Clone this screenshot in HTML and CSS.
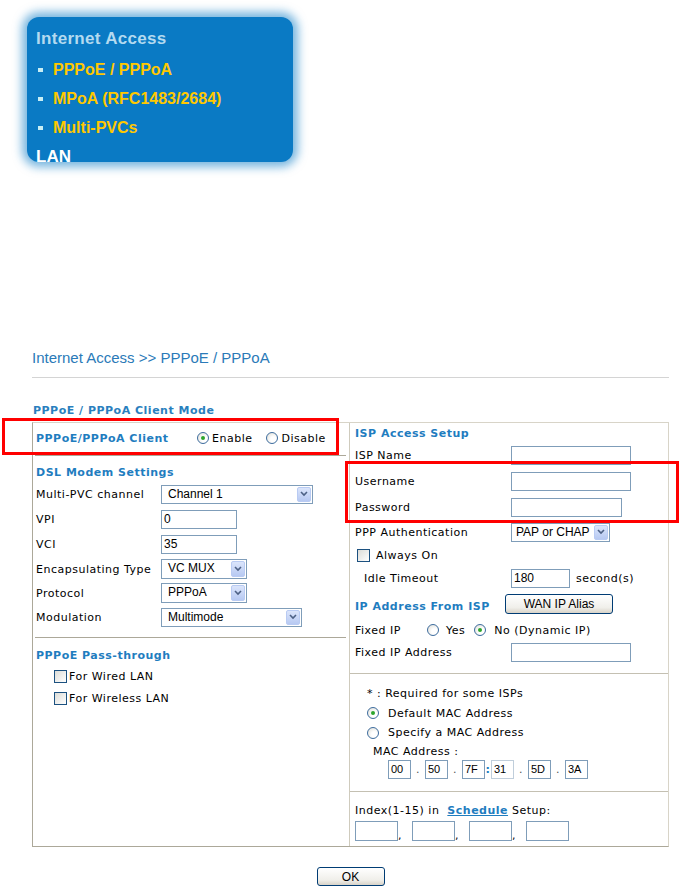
FILE: index.html
```html
<!DOCTYPE html>
<html lang="en">
<head>
    <meta charset="UTF-8">
    <title>Internet Access - PPPoE / PPPoA</title>
    <link rel="stylesheet" href="styles.css">
</head>
<body>
    <div class="menu">
        <div class="menu-title">Internet Access</div>
        <div class="menu-item"><span class="bullet"></span>PPPoE / PPPoA</div>
        <div class="menu-item"><span class="bullet"></span>MPoA (RFC1483/2684)</div>
        <div class="menu-item"><span class="bullet"></span>Multi-PVCs</div>
        <div class="menu-lan">LAN</div>
    </div>

    <div class="main">
        <div class="page-title">Internet Access &gt;&gt; PPPoE / PPPoA</div>
        <div class="section-title">PPPoE / PPPoA Client Mode</div>

        <div class="panel">
            <div class="col-left">
                <div class="client-row">
                    <span class="client-label">PPPoE/PPPoA Client</span>
                    <span class="radio on"></span><span class="opt">Enable</span>
                    <span class="radio gap-l"></span><span class="opt">Disable</span>
                </div>
                <div class="rule"></div>

                <div class="heading dsl-heading">DSL Modem Settings</div>
                <div class="row h24"><span class="lbl-l">Multi-PVC channel</span>
                    <div class="select w152">Channel 1<span class="arrow"><svg width="8" height="6" viewBox="0 0 8 6"><polyline points="1,1 4,4 7,1" fill="none" stroke="#4d6185" stroke-width="1.6"/></svg></span></div>
                </div>
                <div class="row h26"><span class="lbl-l">VPI</span><div class="input w76">0</div></div>
                <div class="row h25"><span class="lbl-l">VCI</span><div class="input w76">35</div></div>
                <div class="row h24"><span class="lbl-l">Encapsulating Type</span>
                    <div class="select w86">VC MUX<span class="arrow"><svg width="8" height="6" viewBox="0 0 8 6"><polyline points="1,1 4,4 7,1" fill="none" stroke="#4d6185" stroke-width="1.6"/></svg></span></div>
                </div>
                <div class="row h24"><span class="lbl-l">Protocol</span>
                    <div class="select w86">PPPoA<span class="arrow"><svg width="8" height="6" viewBox="0 0 8 6"><polyline points="1,1 4,4 7,1" fill="none" stroke="#4d6185" stroke-width="1.6"/></svg></span></div>
                </div>
                <div class="row h24"><span class="lbl-l">Modulation</span>
                    <div class="select w141">Multimode<span class="arrow"><svg width="8" height="6" viewBox="0 0 8 6"><polyline points="1,1 4,4 7,1" fill="none" stroke="#4d6185" stroke-width="1.6"/></svg></span></div>
                </div>
                <div class="rule rule-pass"></div>

                <div class="heading pass-heading">PPPoE Pass-through</div>
                <div class="row h22 indent-check"><span class="check"></span><span class="check-text">For Wired LAN</span></div>
                <div class="row h22 indent-check"><span class="check"></span><span class="check-text">For Wireless LAN</span></div>
            </div>

            <div class="col-right">
                <div class="heading isp-heading">ISP Access Setup</div>
                <div class="row h25"><span class="lbl-r">ISP Name</span><div class="input w120"></div></div>
                <div class="row h26"><span class="lbl-r">Username</span><div class="input w120"></div></div>
                <div class="row h26"><span class="lbl-r">Password</span><div class="input w111"></div></div>
                <div class="row h24"><span class="lbl-r">PPP Authentication</span>
                    <div class="select w99 tight">PAP or CHAP<span class="arrow"><svg width="8" height="6" viewBox="0 0 8 6"><polyline points="1,1 4,4 7,1" fill="none" stroke="#4d6185" stroke-width="1.6"/></svg></span></div>
                </div>
                <div class="row h23"><span class="check always"></span><span class="check-text">Always On</span></div>
                <div class="row h22"><span class="lbl-r idle">Idle Timeout</span><div class="input w59">180</div><span class="unit">second(s)</span></div>
                <div class="row h30">
                    <span class="heading ip-heading">IP Address From ISP</span>
                    <button class="btn btn-alias">WAN IP Alias</button>
                </div>
                <div class="row h22"><span class="lbl-fixed">Fixed IP</span>
                    <span class="radio"></span><span class="opt yes">Yes</span>
                    <span class="radio on"></span><span class="opt no">No (Dynamic IP)</span>
                </div>
                <div class="row h22"><span class="lbl-r">Fixed IP Address</span><div class="input w120"></div></div>
                <div class="rule rule-r"></div>

                <div class="mac-block">
                    <div class="row h20">* : Required for some ISPs</div>
                    <div class="row h20"><span class="radio on"></span><span class="opt wide">Default MAC Address</span></div>
                    <div class="row h19"><span class="radio"></span><span class="opt wide">Specify a MAC Address</span></div>
                    <div class="row h18 mac-label">MAC Address :</div>
                    <div class="row h19 mac-row">
                        <div class="input mac">00</div><span class="sep">.</span>
                        <div class="input mac">50</div><span class="sep">.</span>
                        <div class="input mac">7F</div><span class="sep colon">:</span>
                        <div class="input mac dim">31</div><span class="sep">.</span>
                        <div class="input mac">5D</div><span class="sep">.</span>
                        <div class="input mac">3A</div>
                    </div>
                </div>
                <div class="rule rule-r rule-index"></div>

                <div class="index-block">
                    <div class="row h20">Index(1-15) in&nbsp;&nbsp;<a class="link" href="#">Schedule</a>&nbsp;Setup:</div>
                    <div class="row h22">
                        <div class="input w43"></div><span class="comma">,</span>
                        <div class="input w43"></div><span class="comma">,</span>
                        <div class="input w43"></div><span class="comma">,</span>
                        <div class="input w43"></div>
                    </div>
                </div>
            </div>
        </div>

        <div class="actions"><button class="btn btn-ok">OK</button></div>
    </div>

    <div class="mark mark-client"></div>
    <div class="mark mark-account"></div>
</body>
</html>
```

FILE: styles.css
```css
body {
    margin: 0;
    position: relative;
    background-color: #ffffff;
    font-family: "DejaVu Sans", Verdana, sans-serif;
    font-size: 11px;
    letter-spacing: 0.5px;
    color: #000000;
}

/* top menu picture */
.menu {
    margin: 17px 0 0 27px;
    width: 257px;
    height: 133px;
    padding: 12px 0 0 9px;
    background-color: #0a7ac4;
    border-radius: 12px;
    box-shadow: 0 0 10px 5px rgba(10, 122, 196, 0.55);
    font-family: "Liberation Sans", Arial, sans-serif;
    font-weight: bold;
    letter-spacing: 0;
}
.menu-title {
    font-size: 17px;
    line-height: 20px;
    color: #b4daf0;
    letter-spacing: 0.3px;
    margin-bottom: 6px;
}
.menu-item {
    font-size: 16px;
    line-height: 29px;
    color: #ffc800;
    display: flex;
    align-items: center;
}
.bullet {
    width: 5px;
    height: 4px;
    background-color: #c8eef4;
    margin: 0 10px 0 2px;
}
.menu-lan {
    font-size: 17px;
    line-height: 29px;
    color: #ffffff;
}

/* main form */
.main {
    margin: 187px 0 0 32px;
    width: 637px;
}
.page-title {
    font-family: "Liberation Sans", Arial, sans-serif;
    font-size: 15px;
    letter-spacing: 0;
    line-height: 18px;
    color: #2a7ab8;
    padding-bottom: 10px;
    border-bottom: 1px solid #d4d4d4;
}
.section-title {
    margin-top: 26px;
    margin-bottom: 4px;
    line-height: 14px;
    font-weight: bold;
    color: #2a7fbe;
    padding-left: 1px;
}
.panel {
    display: flex;
    border: 1px solid #d8d4c8;
    border-left-color: #aca899;
    border-bottom-color: #aca899;
}
.col-left {
    width: 313px;
    padding-left: 3px;
    border-right: 1px solid #cfcbbd;
}
.col-right {
    width: 313px;
    padding-left: 5px;
}
.heading {
    font-weight: bold;
    color: #1f7dbf;
    line-height: 18px;
}
.dsl-heading {
    padding-top: 8px;
}
.pass-heading {
    padding-top: 9px;
}
.isp-heading {
    padding-top: 2px;
}
.ip-heading {
    width: 150px;
    padding-top: 6px;
}
.rule {
    height: 1px;
    background-color: #aca899;
    margin-left: -1px;
    margin-right: 3px;
}
.rule-pass {
    margin-top: 8px;
}
.rule-r {
    margin-left: -5px;
    margin-right: 0;
    margin-top: 10px;
    background-color: #c4c0b2;
}
.rule-index {
    margin-top: 12px;
}

.client-row {
    height: 30px;
    margin-bottom: 2px;
    display: flex;
    align-items: center;
}
.client-label {
    width: 161px;
    font-weight: bold;
    color: #1f7dbf;
}

.row {
    display: flex;
    align-items: center;
    white-space: nowrap;
}
.h18 { height: 18px; }
.h19 { height: 19px; }
.h20 { height: 20px; }
.h22 { height: 22px; }
.h23 { height: 23px; }
.h24 { height: 24px; }
.h25 { height: 25px; }
.h26 { height: 26px; }
.h30 { height: 30px; }

.lbl-l {
    width: 125px;
}
.lbl-r {
    width: 156px;
}
.idle {
    width: 147px;
    padding-left: 9px;
}
.lbl-fixed {
    width: 72px;
}
.unit {
    margin-left: 6px;
}

/* form controls drawn XP style */
.input {
    box-sizing: border-box;
    height: 19px;
    border: 1px solid #7f9db9;
    background-color: #ffffff;
    font-family: "Liberation Sans", Arial, sans-serif;
    font-size: 12px;
    letter-spacing: 0;
    line-height: 17px;
    padding-left: 2px;
}
.w43 { width: 43px; height: 20px; }
.w59 { width: 59px; }
.w76 { width: 76px; }
.w111 { width: 111px; }
.w120 { width: 120px; }

.select {
    box-sizing: border-box;
    height: 19px;
    border: 1px solid #7f9db9;
    background-color: #ffffff;
    font-family: "Liberation Sans", Arial, sans-serif;
    font-size: 12px;
    letter-spacing: 0;
    line-height: 17px;
    padding-left: 6px;
    display: flex;
    justify-content: space-between;
}
.select.tight {
    padding-left: 4px;
}
.w86 { width: 86px; height: 20px; }
.w99 { width: 99px; }
.w141 { width: 141px; }
.w152 { width: 152px; }
.arrow {
    width: 14px;
    margin: 1px 1px 0 0;
    height: 15px;
    box-sizing: border-box;
    border: 1px solid #b9cbf3;
    border-radius: 2px;
    background: linear-gradient(#dbe5fb, #b7c9f2);
    display: flex;
    align-items: center;
    justify-content: center;
}
.w86 .arrow {
    height: 16px;
}

.radio {
    width: 12px;
    height: 12px;
    box-sizing: border-box;
    border: 1px solid #3d6c9e;
    border-radius: 50%;
    background: radial-gradient(circle at 65% 65%, #ffffff 30%, #dcdbd3);
    position: relative;
    flex-shrink: 0;
}
.radio.on::after {
    content: "";
    position: absolute;
    left: 3px;
    top: 3px;
    width: 4px;
    height: 4px;
    border-radius: 50%;
    background-color: #2da52d;
}
.opt {
    margin-left: 3px;
}
.gap-l {
    margin-left: 14px;
}
.yes {
    margin: 0 9px 0 7px;
}
.no {
    margin-left: 8px;
}
.opt.wide {
    margin-left: 9px;
}

.check {
    width: 13px;
    height: 13px;
    box-sizing: border-box;
    border: 1px solid #1c5180;
    background: linear-gradient(135deg, #dcdcd7, #ffffff);
    flex-shrink: 0;
}
.check-text {
    margin-left: 2px;
}
.indent-check {
    padding-left: 18px;
}
.always {
    margin: 0 4px 0 2px;
}

.btn {
    box-sizing: border-box;
    border: 1px solid #003c74;
    border-radius: 3px;
    background: linear-gradient(#ffffff, #f0efea 70%, #d8d3c8);
    font-family: "Liberation Sans", Arial, sans-serif;
    font-size: 12px;
    color: #000000;
    padding: 0;
}
.btn-alias {
    width: 108px;
    height: 20px;
}
.actions {
    display: flex;
    justify-content: center;
    margin-top: 20px;
}
.btn-ok {
    width: 68px;
    height: 19px;
}

.mac-block {
    padding: 9px 0 0 12px;
}
.mac-label {
    padding-left: 6px;
}
.mac-row {
    padding-left: 21px;
}
.input.mac {
    width: 23px;
    padding-left: 2px;
    font-size: 11px;
}
.input.dim {
    border-color: #c0cedb;
}
.sep {
    width: 14px;
    text-align: center;
    color: #555555;
}
.sep.colon {
    width: 6px;
    color: #1f7dbf;
    font-weight: bold;
}

.index-block {
    padding-top: 8px;
    padding-bottom: 4px;
}
.link {
    font-weight: bold;
    color: #1f7dbf;
}
.comma {
    width: 14px;
    padding-top: 8px;
}

/* red callout frames drawn over the form */
.mark {
    position: absolute;
    border: 3px solid #ff0000;
    box-sizing: border-box;
}
.mark-client {
    left: 2px;
    top: 418px;
    width: 337px;
    height: 37px;
}
.mark-account {
    left: 345px;
    top: 461px;
    width: 334px;
    height: 62px;
}
```
